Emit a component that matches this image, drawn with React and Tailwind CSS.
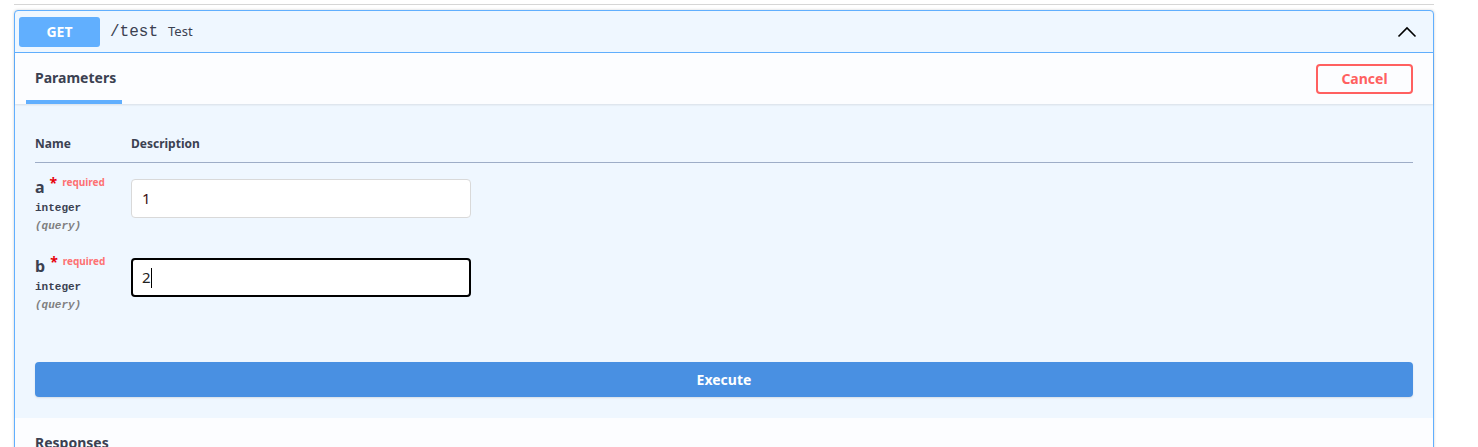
export default function App() {
  const params = [
    { name: "a", value: "1", focused: false },
    { name: "b", value: "2", focused: true },
  ];

  return (
    <div className="w-[1478px] h-[447px] overflow-hidden bg-white font-['Noto_Sans',sans-serif] text-[#3b4151]">
      <div className="pl-[14px] w-[1434px] pt-[4px]">
        {/* divider above */}
        <div className="h-px bg-[#d6d6d6]" />

        {/* Operation block */}
        <div className="mt-[5px] border border-[#61affe] rounded-[4px] bg-[#eff7ff] shadow-[0_0_3px_rgba(0,0,0,0.19)]">
          {/* Summary */}
          <div className="flex items-center h-[42px] px-[4px] border-b border-[#61affe]">
            <span className="w-[81px] h-[30px] rounded-[3px] bg-[#61affe] text-white font-bold text-[14px] flex items-center justify-center">
              GET
            </span>
            <span className="ml-[10px] font-['Liberation_Mono',monospace] text-[16px] text-[#3b4151]">
              /test
            </span>
            <span className="ml-[10px] text-[13px] text-[#3b4151]">Test</span>
            <svg
              className="ml-auto mr-[12px]"
              width="20"
              height="12"
              viewBox="0 0 20 12"
              fill="none"
            >
              <path d="M1.5 10.5 L10 2 L18.5 10.5" stroke="#000" strokeWidth="1.6" />
            </svg>
          </div>

          {/* Tab header */}
          <div className="flex items-center justify-between h-[51px] bg-white/80 shadow-[0_1px_2px_rgba(0,0,0,0.1)] pl-[11px] pr-[20px]">
            <div className="h-full flex flex-col justify-end">
              <div className="h-full flex items-center pt-[2px] px-[9px] text-[14px] font-bold">Parameters</div>
              <div className="h-[4px] w-[96px] bg-[#61affe]" />
            </div>
            <button className="w-[97px] h-[30px] border-2 border-[#ff6060] rounded-[4px] text-[#ff6060] text-[14px] font-bold bg-transparent">
              Cancel
            </button>
          </div>

          {/* Parameters table */}
          <div className="px-[20px] pt-[29px]">
            <div className="flex h-[30px] border-b border-[#9eadc7] text-[12px] font-bold">
              <div className="w-[96px] pt-[2px]">Name</div>
              <div className="pt-[2px]">Description</div>
            </div>

            {params.map((p) => (
              <div key={p.name} className="flex h-[79px] pt-[12px]">
                <div className="w-[96px]">
                  <div className="flex items-start">
                    <span className="text-[16px] font-bold leading-[20px] mt-[2px]">{p.name}</span>
                    <span className="ml-[5px] text-red-600 font-bold text-[14px] leading-[16px]">*</span>
                    <span className="ml-[5px] text-[10px] font-bold text-[#ff6060]/90 leading-[12px] mt-[1px]">
                      required
                    </span>
                  </div>
                  <div className="mt-[2px] font-['Liberation_Mono',monospace] text-[11px] font-bold leading-[18px]">
                    integer
                  </div>
                  <div className="font-['Liberation_Mono',monospace] text-[11px] italic font-semibold text-[#808080] leading-[18px]">
                    (query)
                  </div>
                </div>
                <div className="pt-[4px]">
                  <div
                    className={
                      p.focused
                        ? "w-[340px] h-[39px] bg-white rounded-[4px] border-2 border-black flex items-center px-[9px] text-[15px] text-[#222]"
                        : "w-[340px] h-[39px] bg-white rounded-[4px] border border-[#d9d9d9] flex items-center px-[10px] text-[15px] text-[#3b1010]"
                    }
                  >
                    {p.value}
                    {p.focused && <span className="w-px h-[20px] bg-black" />}
                  </div>
                </div>
              </div>
            ))}

            <div className="pt-[41px] pb-[21px]">
              <button className="w-full h-[35px] rounded-[4px] bg-[#4990e2] text-white text-[14px] font-bold shadow-[0_1px_2px_rgba(0,0,0,0.1)]">
                Execute
              </button>
            </div>
          </div>

          {/* Responses */}
          <div className="bg-white/80 h-[60px] px-[20px] pt-[14px]">
            <div className="text-[14px] font-bold">Responses</div>
          </div>
        </div>
      </div>
    </div>
  );
}
